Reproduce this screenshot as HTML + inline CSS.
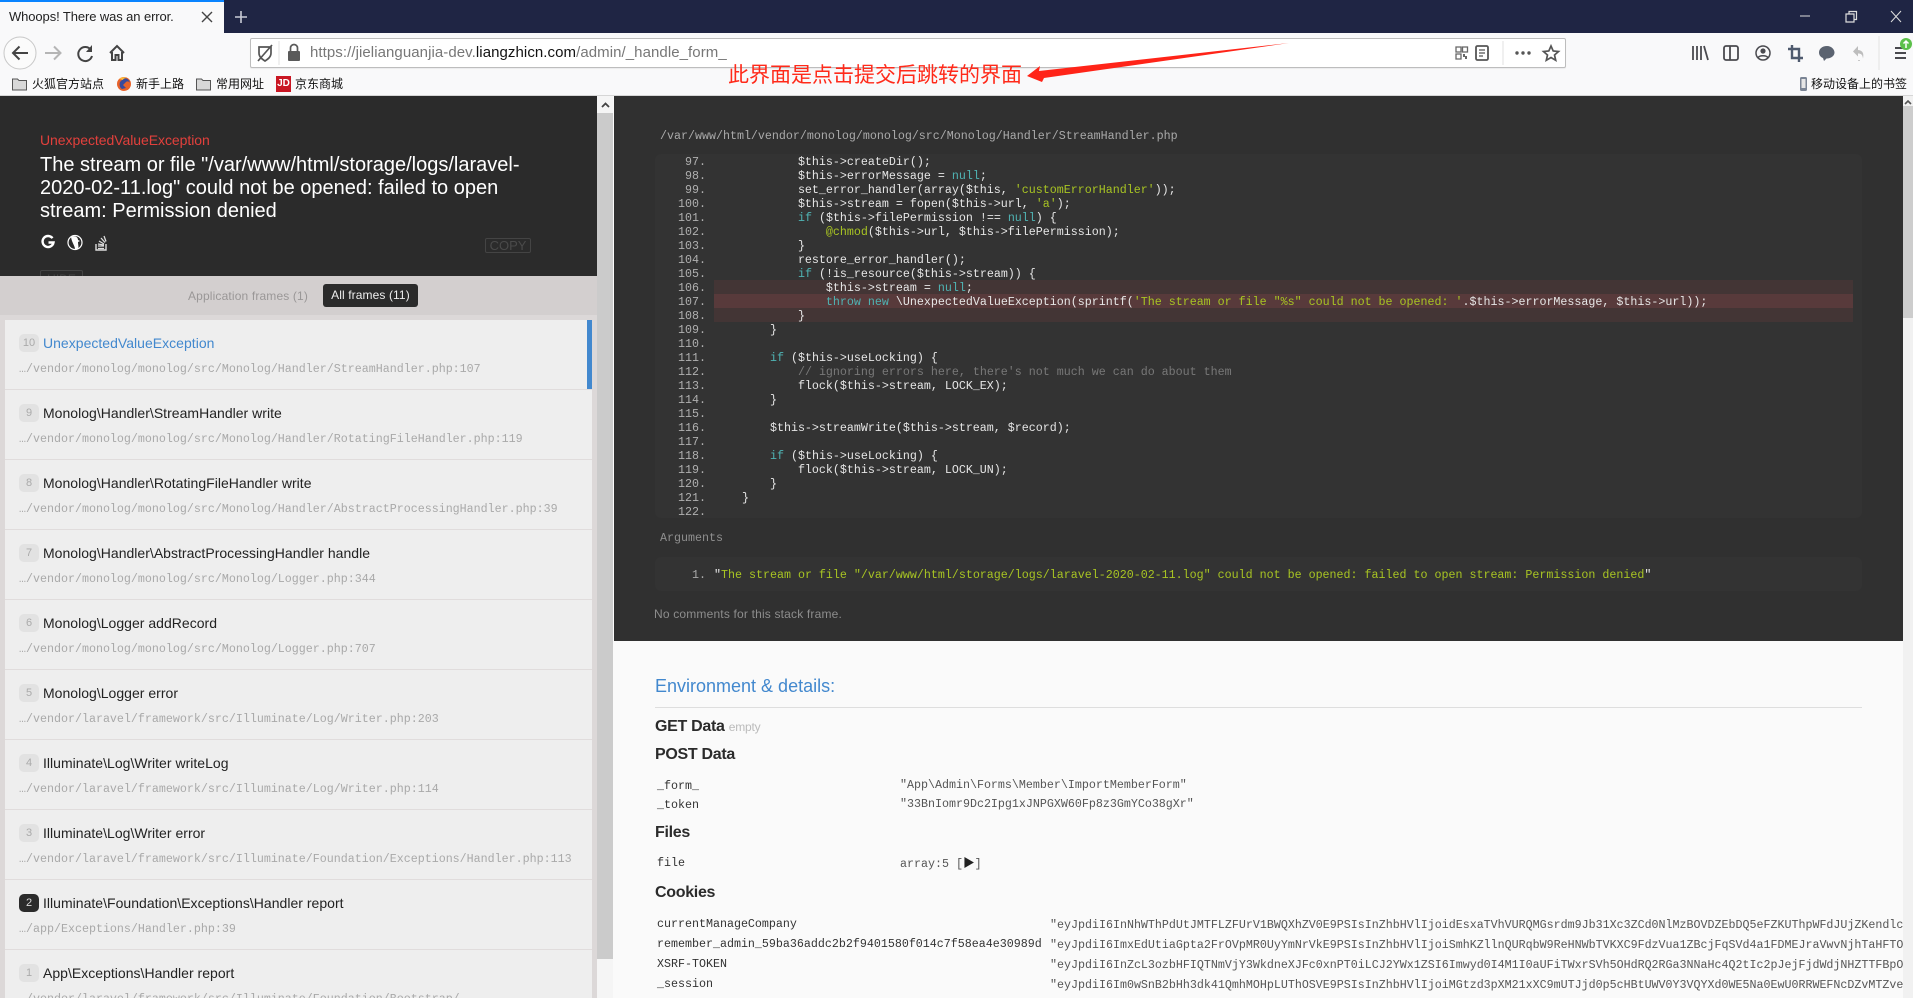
<!DOCTYPE html>
<html lang="zh"><head><meta charset="utf-8"><title>Whoops! There was an error.</title>
<style>
*{box-sizing:border-box}
html,body{margin:0;padding:0;width:1913px;height:998px;overflow:hidden;background:#fafafa;font-family:"Liberation Sans","Noto Sans CJK SC",sans-serif}
#root{position:absolute;left:0;top:0;width:1913px;height:998px;overflow:hidden;background:#fafafa}
.a{position:absolute;white-space:pre;margin:0}
.m{font-family:"Liberation Mono","Noto Sans CJK SC",monospace;font-size:11.67px}
svg{position:absolute;overflow:visible}
.bm{font-size:12px;line-height:16px;top:76px;color:#111}
.fr{position:absolute;left:5px;width:587px;height:70px;background:#eee;border-bottom:1px solid #e0dcdc}
.fr b{position:absolute;left:14px;top:14px;width:20px;height:18px;border-radius:5px;background:#e2e2e2;color:#aaa;font:normal 11px/18px "Liberation Sans",sans-serif;text-align:center}
.fr i{position:absolute;left:38px;top:14px;font:normal 14px/18px "Liberation Sans",sans-serif;color:#222;white-space:pre;letter-spacing:.02px}
.fr u{position:absolute;left:14px;top:42px;font:normal 11.67px/14px "Liberation Mono",monospace;color:#a9a9a9;text-decoration:none;white-space:pre}
#code{white-space:normal}
#code div{height:14px;line-height:14px;white-space:pre;color:#e6e6e6}
.n{display:inline-block;width:51px;text-align:right;color:#b0b0b0;margin-right:8px}
.k{color:#4fb3b3}.s{color:#a8c423}.c{color:#787878}
h4{position:absolute;margin:0;font-size:16px;line-height:20px;color:#2b2b2b;left:655px;letter-spacing:-.3px}
.key{color:#333;line-height:16px;left:657px}.val{color:#555;line-height:16px}
</style></head><body><div id="root">

<!-- browser chrome -->
<div class="a" style="left:0;top:0;width:1913px;height:33px;background:#1f2544"></div>
<div class="a" style="left:0;top:33px;width:1913px;height:63px;background:#f9f9fa"></div>
<div class="a" style="left:0;top:0;width:224px;height:33px;background:#f9f9fa;border-top:2px solid #0a84ff"></div>
<div class="a" style="left:9px;top:9px;font-size:13px;line-height:16px;color:#222;letter-spacing:-.1px">Whoops! There was an error.</div>
<svg style="left:0;top:0" width="1913" height="100" fill="none">
 <path d="M202 12l10 10M212 12l-10 10" stroke="#444" stroke-width="1.4"/>
 <path d="M241 11v12M235 17h12" stroke="#c9cbd6" stroke-width="1.6"/>
 <path d="M1800 16h10" stroke="#ddd" stroke-width="1"/>
 <path d="M1846 14h8v8h-8zM1849 14v-2.500h7.500v8h-2" stroke="#ddd" stroke-width="1.200"/>
 <path d="M1891 11l10 11M1901 11l-10 11" stroke="#ddd" stroke-width="1"/>
 <circle cx="20" cy="53" r="16" fill="#fbfbfb" stroke="#c8c8c8" stroke-width="1"/>
 <path d="M28 53H13M19.500 46.500L13 53l6.500 6.500" stroke="#444" stroke-width="2"/>
 <path d="M45 53h15M54 46.500l6.500 6.500-6.500 6.500" stroke="#b5b5b5" stroke-width="2"/>
 <path d="M91 50a7 7 0 1 0 1 6" stroke="#444" stroke-width="2"/><path d="M92 45v7h-6z" fill="#444"/>
 <path d="M110 53l7-7 7 7M112 52v8h3.500v-5h3v5h3.500v-8" stroke="#444" stroke-width="2"/>
</svg>
<div class="a" style="left:250px;top:38px;width:1316px;height:30px;background:#fff;border:1px solid #bdbdbd;border-radius:2px;box-shadow:0 1px 1px rgba(0,0,0,.06)"></div>
<svg style="left:0;top:0" width="1913" height="100" fill="none">
 <path d="M259 47h12v6c0 4-3 6-6 8-3-2-6-4-6-8zM258 61l14-16" stroke="#555" stroke-width="1.700"/>
 <path d="M279 41v24" stroke="#e2e2e2"/>
 <rect x="288" y="51" width="12" height="10" rx="1" fill="#5a5a5a"/><path d="M290.500 51v-3a3.500 3.500 0 0 1 7 0v3" stroke="#5a5a5a" stroke-width="1.700"/>
 <path d="M1456 47h5v5h-5zM1462.500 47h5v5h-5zM1456 54h5v5h-5z" stroke="#666" stroke-width="1.300"/><path d="M1463 54h2v2h2v3h-2v-2h-2z" fill="#666"/>
 <rect x="1476" y="46" width="12" height="14" rx="1.500" stroke="#555" stroke-width="1.800"/><path d="M1479 50h6M1479 53h6M1479 56h4" stroke="#555" stroke-width="1.200"/>
 <path d="M1503 41v24" stroke="#e2e2e2"/>
 <circle cx="1517" cy="53" r="1.700" fill="#555"/><circle cx="1523" cy="53" r="1.700" fill="#555"/><circle cx="1529" cy="53" r="1.700" fill="#555"/>
 <path d="M1551 46l2.200 5 5.300.500-4 3.500 1.200 5.300-4.700-2.800-4.700 2.800 1.200-5.300-4-3.500 5.300-.500z" stroke="#555" stroke-width="1.700"/>
 <path d="M1693 46v14M1697 46v14M1701 46v14M1704 46l4 14" stroke="#4a4a4f" stroke-width="1.800"/>
 <rect x="1724" y="46" width="14" height="14" rx="2" stroke="#4a4a4f" stroke-width="1.800"/><path d="M1730 46v14" stroke="#4a4a4f" stroke-width="1.800"/>
 <circle cx="1763" cy="53" r="7" stroke="#4a4a4f" stroke-width="1.500"/><circle cx="1763" cy="51" r="2.600" fill="#4a4a4f"/><path d="M1758 58c1-3 9-3 10 0" stroke="#4a4a4f" stroke-width="1.500"/>
 <path d="M1792 45v13h11M1788 49h11v13" stroke="#4f5a6e" stroke-width="2.400"/>
 <path d="M1827 46c-5 0-8 3-8 6.500 0 2.500 1.500 4.500 4 5.500l1 3 2.500-2.500c5 0 8-3 8-6s-3-6.500-7.500-6.500z" fill="#5b6370"/>
 <path d="M1858 46l-5 5.500 5 5v-3c3 0 4.500 1 5 5 1-5 0-8-5-8.500z" fill="#bdbdbd"/><path d="M1859 60v1" stroke="#c8c8c8" stroke-width="2"/>
 <path d="M1879 36v34" stroke="#e2e2e2"/>
 <path d="M1895 48h11M1895 53h11M1895 58h11" stroke="#4a4a4f" stroke-width="2"/>
 <circle cx="1906" cy="44" r="6" fill="#5cc04a"/><path d="M1906 48v-7M1903.500 43.500l2.500-2.500 2.500 2.500" stroke="#fff" stroke-width="1.500"/>
</svg>
<div class="a" style="left:310px;top:44px;font-size:15px;line-height:18px;color:#777;letter-spacing:.07px">https://jielianguanjia-dev.<span style="color:#111">liangzhicn.com</span>/admin/_handle_form_</div>

<!-- bookmarks -->
<svg style="left:0;top:0" width="1913" height="100">
 <path d="M12.500 79h5l1.500 1.500h7.500V90h-14z" fill="#d8d8d8" stroke="#555"/>
 <circle cx="124" cy="84" r="7" fill="#e8622a"/><path d="M124 78a6 6 0 0 1 6 5c-1-2-3-2-4-1l-3 3 3 3-4 1c-2-1-3-4-2-7z" fill="#3a4a9c"/><path d="M119 79a7 7 0 0 1 8-1c-2 0-4 1-4 2z" fill="#fcb93a"/>
 <path d="M196.500 79h5l1.500 1.500h7.500V90h-14z" fill="#d8d8d8" stroke="#555"/>
 <rect x="276" y="76" width="15" height="16" fill="#c91623"/>
 <rect x="1800" y="77" width="7" height="14" rx="1.500" fill="#7a8494"/><rect x="1801.500" y="79" width="4" height="9" fill="#e6e6e6"/>
</svg>
<div class="a bm" style="left:32px">火狐官方站点</div>
<div class="a bm" style="left:136px">新手上路</div>
<div class="a bm" style="left:216px">常用网址</div>
<div class="a" style="left:276px;top:76px;width:15px;height:16px;line-height:16px;color:#fff;font-size:10px;font-weight:bold;text-align:center">JD</div>
<div class="a bm" style="left:295px">京东商城</div>
<div class="a bm" style="left:1811px">移动设备上的书签</div>
<div class="a" style="left:0;top:95px;width:1913px;height:1px;background:#d6d6d6"></div>

<!-- annotation -->
<div class="a" style="left:728px;top:62px;font-size:21px;line-height:28px;color:#ff2a1a;z-index:5">此界面是点击提交后跳转的界面</div>
<svg style="left:0;top:0;z-index:5" width="1913" height="100"><polygon points="1027,76 1040,66 1039,71 1289,43 1044,78 1042,82" fill="#ff2418"/></svg>

<!-- left hero -->
<div class="a" style="left:0;top:96px;width:597px;height:180px;background:#2b2b2b;overflow:hidden">
 <div class="a" style="left:40px;top:174px;width:43px;height:20px;border:1px solid #444;border-radius:2px;color:#444;font-size:12px;line-height:16px;text-align:center">HIDE</div>
</div>
<div class="a" style="left:40px;top:131px;font-size:14px;line-height:18px;color:#e2403c;letter-spacing:-.05px">UnexpectedValueException</div>
<div class="a" style="left:40px;top:153.500px;font-size:20px;line-height:23px;color:#fff;letter-spacing:0">The stream or file "/var/www/html/storage/logs/laravel-
2020-02-11.log" could not be opened: failed to open
stream: Permission denied</div>
<svg style="left:0;top:0" width="620" height="270" fill="none">
 <path d="M52.500 238.200a5.500 5.500 0 1 0 1 4.300h-5" stroke="#fff" stroke-width="2.400"/>
 <circle cx="75" cy="242.500" r="7" stroke="#fff" stroke-width="1.200"/><path d="M71 237c4-2 7 0 7 3l2 1-2 1c0 3 1 5 0 7h-3c0-3-3-6-4-12z" fill="#fff"/>
 <path d="M96 244v6h10v-6" stroke="#ddd" stroke-width="1.400"/><path d="M98 246h6M98 248.500h6M98 244l6 1M99 241l5 3M101 238l4 4.500M104 236l2 5.500" stroke="#ddd" stroke-width="1.300"/>
</svg>
<div class="a" style="left:485px;top:238px;width:46px;height:15px;border:1px solid #444;border-radius:2px;color:#4a4a4a;font-size:13px;line-height:14px;text-align:center">COPY</div>

<!-- frame tabs -->
<div class="a" style="left:0;top:276px;width:597px;height:722px;background:#dcd8d8"></div>
<div class="a" style="left:0;top:276px;width:597px;height:39px;background:#d3cfcf"></div>
<div class="a" style="left:188px;top:287px;font-size:12px;line-height:18px;color:#9a9797;letter-spacing:.15px">Application frames (1)</div>
<div class="a" style="left:323px;top:284px;width:95px;height:23px;background:#2b2b2b;border-radius:3px;color:#eee;font-size:12px;line-height:22px;text-align:center;letter-spacing:.1px">All frames (11)</div>

<!-- frames -->
<div class="fr" style="top:320px"><b>10</b><i style="color:#4288ce">UnexpectedValueException</i><u>…/vendor/monolog/monolog/src/Monolog/Handler/StreamHandler.php:107</u><div style="position:absolute;right:0;top:0;width:5px;height:69px;background:#4288ce"></div></div>
<div class="fr" style="top:390px"><b>9</b><i>Monolog\Handler\StreamHandler write</i><u>…/vendor/monolog/monolog/src/Monolog/Handler/RotatingFileHandler.php:119</u></div>
<div class="fr" style="top:460px"><b>8</b><i>Monolog\Handler\RotatingFileHandler write</i><u>…/vendor/monolog/monolog/src/Monolog/Handler/AbstractProcessingHandler.php:39</u></div>
<div class="fr" style="top:530px"><b>7</b><i>Monolog\Handler\AbstractProcessingHandler handle</i><u>…/vendor/monolog/monolog/src/Monolog/Logger.php:344</u></div>
<div class="fr" style="top:600px"><b>6</b><i>Monolog\Logger addRecord</i><u>…/vendor/monolog/monolog/src/Monolog/Logger.php:707</u></div>
<div class="fr" style="top:670px"><b>5</b><i>Monolog\Logger error</i><u>…/vendor/laravel/framework/src/Illuminate/Log/Writer.php:203</u></div>
<div class="fr" style="top:740px"><b>4</b><i>Illuminate\Log\Writer writeLog</i><u>…/vendor/laravel/framework/src/Illuminate/Log/Writer.php:114</u></div>
<div class="fr" style="top:810px"><b>3</b><i>Illuminate\Log\Writer error</i><u>…/vendor/laravel/framework/src/Illuminate/Foundation/Exceptions/Handler.php:113</u></div>
<div class="fr" style="top:880px"><b style="background:#2b2b2b;color:#ddd">2</b><i>Illuminate\Foundation\Exceptions\Handler report</i><u>…/app/Exceptions/Handler.php:39</u></div>
<div class="fr" style="top:950px"><b>1</b><i>App\Exceptions\Handler report</i><u>…/vendor/laravel/framework/src/Illuminate/Foundation/Bootstrap/</u></div>

<!-- left scrollbar -->
<div class="a" style="left:597px;top:96px;width:16px;height:902px;background:#f5f5f5"></div>
<div class="a" style="left:597px;top:113px;width:16px;height:846px;background:#cbcbcb"></div>
<svg style="left:0;top:0" width="620" height="120" fill="none"><path d="M602 107l3.500-3.500 3.500 3.500" stroke="#444" stroke-width="1.800"/></svg>

<!-- right dark panel -->
<div class="a" style="left:614px;top:96px;width:1289px;height:545px;background:#303030"></div>
<div class="a" style="left:655px;top:154px;width:1207px;height:364px;background:#333;border-radius:6px"></div>
<div class="a" style="left:655px;top:557px;width:1207px;height:34px;background:#333;border-radius:6px"></div>
<div class="a" style="left:714px;top:280px;width:1139px;height:42px;background:#433535"></div>
<div class="a" style="left:714px;top:294px;width:1139px;height:14px;background:#583a3b"></div>
<div class="a m" style="left:660px;top:129px;line-height:14px;color:#aaa">/var/www/html/vendor/monolog/monolog/src/Monolog/Handler/StreamHandler.php</div>

<div id="code" class="a m" style="left:655px;top:155px">
<div><span class="n">97.</span>            $this-&gt;createDir();</div>
<div><span class="n">98.</span>            $this-&gt;errorMessage = <span class="k">null</span>;</div>
<div><span class="n">99.</span>            set_error_handler(array($this, <span class="s">'customErrorHandler'</span>));</div>
<div><span class="n">100.</span>            $this-&gt;stream = fopen($this-&gt;url, <span class="s">'a'</span>);</div>
<div><span class="n">101.</span>            <span class="k">if</span> ($this-&gt;filePermission !== <span class="k">null</span>) {</div>
<div><span class="n">102.</span>                <span class="s">@chmod</span>($this-&gt;url, $this-&gt;filePermission);</div>
<div><span class="n">103.</span>            }</div>
<div><span class="n">104.</span>            restore_error_handler();</div>
<div><span class="n">105.</span>            <span class="k">if</span> (!is_resource($this-&gt;stream)) {</div>
<div><span class="n">106.</span>                $this-&gt;stream = <span class="k">null</span>;</div>
<div><span class="n">107.</span>                <span class="k">throw</span> <span class="k">new</span> \UnexpectedValueException(sprintf(<span class="s">'The stream or file "%s" could not be opened: '</span>.$this-&gt;errorMessage, $this-&gt;url));</div>
<div><span class="n">108.</span>            }</div>
<div><span class="n">109.</span>        }</div>
<div><span class="n">110.</span></div>
<div><span class="n">111.</span>        <span class="k">if</span> ($this-&gt;useLocking) {</div>
<div><span class="n">112.</span>            <span class="c">// ignoring errors here, there's not much we can do about them</span></div>
<div><span class="n">113.</span>            flock($this-&gt;stream, LOCK_EX);</div>
<div><span class="n">114.</span>        }</div>
<div><span class="n">115.</span></div>
<div><span class="n">116.</span>        $this-&gt;streamWrite($this-&gt;stream, $record);</div>
<div><span class="n">117.</span></div>
<div><span class="n">118.</span>        <span class="k">if</span> ($this-&gt;useLocking) {</div>
<div><span class="n">119.</span>            flock($this-&gt;stream, LOCK_UN);</div>
<div><span class="n">120.</span>        }</div>
<div><span class="n">121.</span>    }</div>
<div><span class="n">122.</span></div>
</div>

<div class="a m" style="left:660px;top:531px;line-height:14px;color:#8f8f8f">Arguments</div>
<div class="a m" style="left:692px;top:568px;line-height:14px;color:#aaa">1.</div>
<div class="a m" style="left:714px;top:568px;line-height:14px;color:#a8c423"><span style="color:#e6e6e6">"</span>The stream or file "/var/www/html/storage/logs/laravel-2020-02-11.log" could not be opened: failed to open stream: Permission denied<span style="color:#e6e6e6">"</span></div>
<div class="a" style="left:654px;top:606px;font-size:12px;line-height:16px;color:#8d8d8d;letter-spacing:.18px">No comments for this stack frame.</div>

<!-- env -->
<div class="a" style="left:655px;top:675px;font-size:18px;line-height:22px;color:#4288ce;letter-spacing:0">Environment &amp; details:</div>
<div class="a" style="left:655px;top:707px;width:1207px;height:1px;background:#dedede"></div>
<h4 style="top:717px">GET Data <span style="font-weight:normal;font-size:12px;color:#bbb;letter-spacing:-.2px">empty</span></h4>
<h4 style="top:745px">POST Data</h4>
<div class="a m key" style="top:778px">_form_</div><div class="a m val" style="left:900px;top:777px">"App\Admin\Forms\Member\ImportMemberForm"</div>
<div class="a m key" style="top:797px">_token</div><div class="a m val" style="left:900px;top:796px">"33BnIomr9Dc2Ipg1xJNPGXW60Fp8z3GmYCo38gXr"</div>
<h4 style="top:823px">Files</h4>
<div class="a m key" style="top:855px">file</div><div class="a m val" style="left:900px;top:856px">array:5 [<span style="color:#222">▶</span>]</div>
<h4 style="top:883px">Cookies</h4>
<div class="a m key" style="top:916px">currentManageCompany</div>
<div class="a m key" style="top:936px">remember_admin_59ba36addc2b2f9401580f014c7f58ea4e30989d</div>
<div class="a m key" style="top:956px">XSRF-TOKEN</div>
<div class="a m key" style="top:976px">_session</div>
<div class="a" style="left:1050px;top:0;width:853px;height:998px;overflow:hidden">
<div class="a m val" style="left:0;top:917px">"eyJpdiI6InNhWThPdUtJMTFLZFUrV1BWQXhZV0E9PSIsInZhbHVlIjoidEsxaTVhVURQMGsrdm9Jb31Xc3ZCd0NlMzBOVDZEbDQ5eFZKUThpWFdJUjZKendlc</div>
<div class="a m val" style="left:0;top:937px">"eyJpdiI6ImxEdUtiaGpta2FrOVpMR0UyYmNrVkE9PSIsInZhbHVlIjoiSmhKZllnQURqbW9ReHNWbTVKXC9FdzVua1ZBcjFqSVd4a1FDMEJraVwvNjhTaHFTO</div>
<div class="a m val" style="left:0;top:957px">"eyJpdiI6InZcL3ozbHFIQTNmVjY3WkdneXJFc0xnPT0iLCJ2YWx1ZSI6Imwyd0I4M1I0aUFiTWxrSVh5OHdRQ2RGa3NNaHc4Q2tIc2pJejFjdWdjNHZTTFBpO</div>
<div class="a m val" style="left:0;top:977px">"eyJpdiI6Im0wSnB2bHh3dk41QmhMOHpLUThOSVE9PSIsInZhbHVlIjoiMGtzd3pXM21xXC9mUTJjd0p5cHBtUWV0Y3VQYXd0WE5Na0EwU0RRWEFNcDZvMTZve</div>
</div>

<!-- page scrollbar -->
<div class="a" style="left:1903px;top:96px;width:10px;height:902px;background:#f1f1f1"></div>
<div class="a" style="left:1903px;top:106px;width:10px;height:212px;background:#cdcdcd"></div>
<svg style="left:0;top:0" width="1913" height="110" fill="none"><path d="M1905 104l3-3 3 3" stroke="#555" stroke-width="1.600"/></svg>
</div></body></html>
